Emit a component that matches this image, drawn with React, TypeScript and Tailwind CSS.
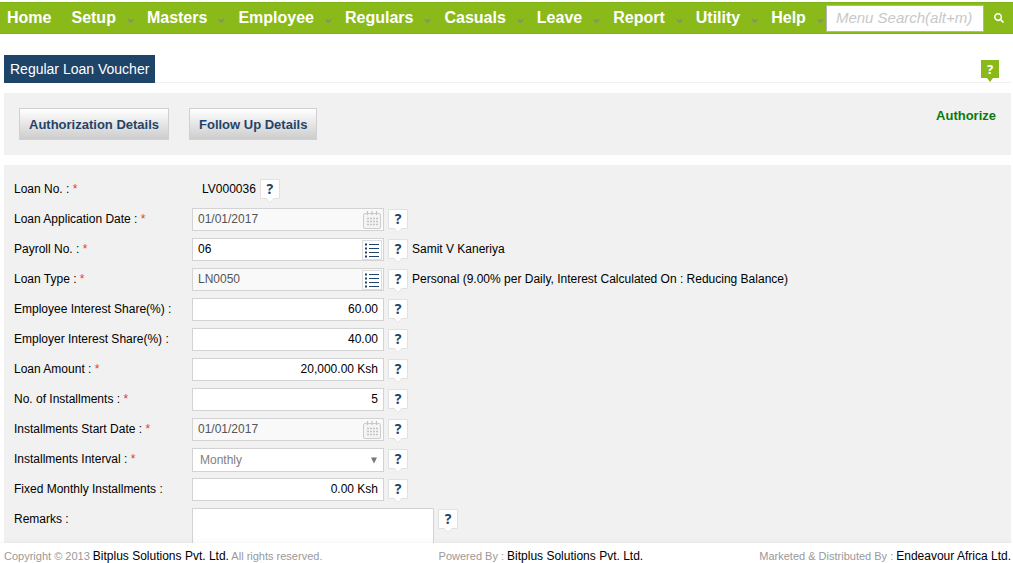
import React from "react";
import { FaSearch } from "react-icons/fa";

const menus = ["Setup", "Masters", "Employee", "Regulars", "Casuals", "Leave", "Report", "Utility", "Help"];

const fieldBox =
  "block h-[23px] w-full border border-[#d3d3d3] px-[5px] pb-px text-[12px] leading-4 outline-none";

function Chevron() {
  return (
    <svg width="7" height="6" viewBox="0 0 7 6" className="mt-[5px]" aria-hidden="true">
      <path d="M1 1.5 L3.5 4 L6 1.5" fill="none" stroke="#879269" strokeWidth="1.8" />
    </svg>
  );
}

function CalendarIcon() {
  return (
    <svg width="18" height="18" viewBox="0 0 18 18" aria-hidden="true">
      <rect x="0.5" y="2.5" width="17" height="15" rx="1.5" fill="#f4f4f4" stroke="#cdcdcd" />
      <path d="M4.5 0v4M9 0v4M13.5 0v4" stroke="#c4c4c4" strokeWidth="1.2" />
      <path
        d="M4 7.5h2M7 7.5h2M10 7.5h2M13 7.5h2M4 10.5h2M7 10.5h2M10 10.5h2M13 10.5h2M4 13.5h2M7 13.5h2M10 13.5h2M13 13.5h2"
        stroke="#c4c4c4"
        strokeWidth="1.6"
      />
    </svg>
  );
}

function ListIcon() {
  return (
    <svg width="20" height="20" viewBox="0 0 20 20" aria-hidden="true">
      <rect x="0.5" y="0.5" width="19" height="19" fill="#fff" stroke="#dedede" />
      <path d="M3 4.5h2M3 8.5h2M3 12.5h2M3 16.5h2" stroke="#1f4469" strokeWidth="2" />
      <path d="M7 4.5h10M7 8.5h10M7 12.5h10M7 16.5h10" stroke="#1f4469" />
    </svg>
  );
}

function Help({ topic }: { topic: string }) {
  return (
    <button
      type="button"
      aria-label={"Help: " + topic}
      className="relative mt-px flex h-5 w-5 shrink-0 items-center justify-center rounded-[1px] border border-[#e0e0e0] bg-white font-['Noto_Sans',sans-serif] text-[14px] leading-none font-bold text-[#1f4469]"
    >
      ?
      <svg width="8" height="5" viewBox="0 0 8 5" className="absolute top-[18px] left-[5px]" aria-hidden="true">
        <path d="M0 0.5 L4 4.5 L8 0.5" fill="#fff" stroke="#e0e0e0" />
        <path d="M1 0h6v1H1z" fill="#fff" />
      </svg>
    </button>
  );
}

interface RowProps {
  label: string;
  id: string;
  required?: boolean;
  note?: string;
  children: React.ReactNode;
}

function Row({ label, id, required, note, children }: RowProps) {
  return (
    <div className="flex min-h-[30px] items-start pt-[3px] leading-[22px]">
      <label htmlFor={id} className="w-[178px] shrink-0">
        {label} : {required && <span className="text-[#e04040]">*</span>}
      </label>
      <div className="flex min-w-0 items-start gap-1">
        {children}
        <Help topic={label} />
        {note && <span>{note}</span>}
      </div>
    </div>
  );
}

interface TextFieldProps {
  id: string;
  value: string;
  locked?: boolean;
  numeric?: boolean;
  icon?: "calendar" | "list";
}

function TextField({ id, value, locked, numeric, icon }: TextFieldProps) {
  return (
    <div className="relative w-48 shrink-0">
      <input
        id={id}
        type="text"
        defaultValue={value}
        readOnly={locked}
        className={
          fieldBox +
          (locked ? " bg-[#f9f9f9] text-[#555]" : " bg-white text-black") +
          (numeric ? " text-right" : "")
        }
      />
      {icon === "calendar" && (
        <button type="button" aria-label="Pick a date" className="absolute top-[3px] right-[3px]">
          <CalendarIcon />
        </button>
      )}
      {icon === "list" && (
        <button type="button" aria-label="Choose from list" className="absolute top-[2px] right-[2px]">
          <ListIcon />
        </button>
      )}
    </div>
  );
}

function ToolButton({ children }: { children: React.ReactNode }) {
  return (
    <button
      type="button"
      className="h-8 border border-[#d0d0d0] bg-linear-to-b from-white to-[#cdcdcd] px-[9px] pt-[2px] text-[13px] font-bold text-[#1f4469]"
    >
      {children}
    </button>
  );
}

export default function App() {
  return (
    <div className="flex h-screen flex-col overflow-hidden bg-white pt-[2px] font-['Liberation_Sans',Arial,sans-serif] text-[12px] text-black">
      <header className="flex h-8 shrink-0 items-center border-t border-b border-t-[#7cb518] border-b-[#7cb518] bg-[#8aba1a]">
        <nav className="flex shrink-0 items-center text-[16px] font-bold text-white">
          <a href="#home" className="pr-5 pl-[7px]">Home</a>
          {menus.map((name) => (
            <a key={name} href={"#" + name.toLowerCase()} className="mr-[13px] flex items-center gap-[11px] last:mr-[2px]">
              {name}
              <Chevron />
            </a>
          ))}
        </nav>
        <input
          type="text"
          aria-label="Menu search"
          placeholder="Menu Search(alt+m)"
          className="h-[27px] min-w-0 flex-1 border border-[#b3b3b3] bg-white px-[9px] pb-[2px] text-[15px] italic outline-none placeholder:text-[#c8c8c8]"
        />
        <button type="button" aria-label="Search" className="flex h-full w-[29px] shrink-0 items-center justify-center text-white">
          <FaSearch size={10} />
        </button>
      </header>

      <main className="flex min-h-0 flex-1 flex-col gap-[10px] overflow-hidden pt-[21px] pr-[2px] pl-1">
        <div className="flex h-7 shrink-0 items-start justify-between border-b border-[#f0f0f0] pr-3">
          <h1 className="h-7 bg-[#1f4469] px-[6px] text-[14px] leading-7 text-white">Regular Loan Voucher</h1>
          <button
            type="button"
            aria-label="Page help"
            className="relative mt-[5px] flex h-[18px] w-[18px] items-center justify-center bg-[#8aba1a] font-['Noto_Sans',sans-serif] text-[13px] leading-none font-bold text-white"
          >
            ?
            <svg width="6" height="4" viewBox="0 0 6 4" className="absolute top-[18px] left-[6px]" aria-hidden="true">
              <path d="M0 0h6L3 4z" fill="#8aba1a" />
            </svg>
          </button>
        </div>

        <section className="flex h-[62px] shrink-0 items-start justify-between bg-[#f1f1f1] px-[15px] pt-[15px]">
          <div className="flex gap-5">
            <ToolButton>Authorization Details</ToolButton>
            <ToolButton>Follow Up Details</ToolButton>
          </div>
          <a href="#authorize" className="text-[13px] leading-[15px] font-bold text-[#0b7a0b]">Authorize</a>
        </section>

        <form className="shrink-0 bg-[#f1f1f1] pt-[10px] pl-[10px]">
          <Row label="Loan No." id="loan-no" required>
            <output id="loan-no" className="pl-[10px]">LV000036</output>
          </Row>
          <Row label="Loan Application Date" id="app-date" required>
            <TextField id="app-date" value="01/01/2017" locked icon="calendar" />
          </Row>
          <Row label="Payroll No." id="payroll" required note="Samit V Kaneriya">
            <TextField id="payroll" value="06" icon="list" />
          </Row>
          <Row
            label="Loan Type"
            id="loan-type"
            required
            note="Personal (9.00% per Daily, Interest Calculated On : Reducing Balance)"
          >
            <TextField id="loan-type" value="LN0050" locked icon="list" />
          </Row>
          <Row label="Employee Interest Share(%)" id="employee-share">
            <TextField id="employee-share" value="60.00" numeric />
          </Row>
          <Row label="Employer Interest Share(%)" id="employer-share">
            <TextField id="employer-share" value="40.00" numeric />
          </Row>
          <Row label="Loan Amount" id="amount" required>
            <TextField id="amount" value="20,000.00 Ksh" numeric />
          </Row>
          <Row label="No. of Installments" id="count" required>
            <TextField id="count" value="5" numeric />
          </Row>
          <Row label="Installments Start Date" id="start-date" required>
            <TextField id="start-date" value="01/01/2017" locked icon="calendar" />
          </Row>
          <Row label="Installments Interval" id="interval" required>
            <div className="relative w-48 shrink-0">
              <select
                id="interval"
                className="block h-6 w-full appearance-none border border-[#d3d3d3] bg-white px-[7px] text-[12px] leading-4 text-[#808080] outline-none"
              >
                <option>Monthly</option>
              </select>
              <svg
                width="6"
                height="7"
                viewBox="0 0 6 7"
                className="pointer-events-none absolute top-[9px] right-[7px]"
                aria-hidden="true"
              >
                <path d="M0 0.5h6L3 6.5z" fill="#777" />
              </svg>
            </div>
          </Row>
          <Row label="Fixed Monthly Installments" id="fixed">
            <TextField id="fixed" value="0.00 Ksh" numeric />
          </Row>
          <Row label="Remarks" id="remarks">
            <textarea
              id="remarks"
              className="h-[60px] w-[242px] shrink-0 resize-none border border-[#d3d3d3] bg-white px-[5px] text-[12px] outline-none"
            />
          </Row>
        </form>
      </main>

      <footer className="flex h-5 shrink-0 items-center justify-between bg-white pt-[6px] pr-[2px] pl-1 text-[11px] leading-4 whitespace-nowrap text-[#999] shadow-[0_0_6px_rgba(0,0,0,0.06)]">
        <p>
          Copyright © 2013 <a href="#bitplus" className="text-[12px] text-black">Bitplus Solutions Pvt. Ltd.</a> All rights
          reserved.
        </p>
        <p>
          Powered By : <a href="#bitplus" className="text-[12px] text-black">Bitplus Solutions Pvt. Ltd.</a>
        </p>
        <p>
          Marketed &amp; Distributed By : <a href="#endeavour" className="text-[12px] text-black">Endeavour Africa Ltd.</a>
        </p>
      </footer>
    </div>
  );
}
